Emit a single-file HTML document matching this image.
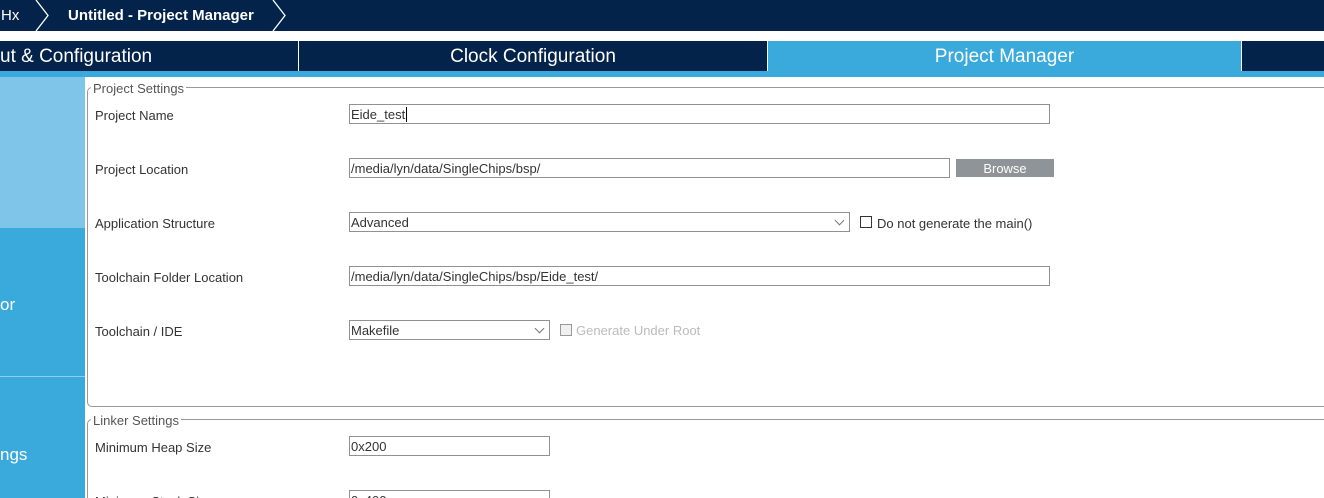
<!DOCTYPE html>
<html style="overflow:hidden;width:1324px;height:498px"><head><style>
*{margin:0;padding:0;box-sizing:border-box}
body{width:1324px;height:498px;overflow:hidden;background:#fff;font-family:"Liberation Sans",sans-serif;position:relative}
.a{position:absolute}
.lbl{position:absolute;font-size:13px;color:#333;left:95px}
.inp{position:absolute;border:1px solid #8e9296;height:20px;font-size:13px;color:#333;padding-left:1px;line-height:19px;background:#fff}
.chev{position:absolute;right:6px;width:7px;height:7px;border-right:1px solid #777;border-bottom:1px solid #777;transform:rotate(45deg);top:4px}
.cb{position:absolute;width:12px;height:12px;border:1px solid #333}
</style></head><body>
<div class="a" style="left:0;top:0;width:1324px;height:31px;background:#03234b"></div>
<div class="a" style="left:1px;top:7px;color:#fff;font-size:15px">Hx</div>
<svg class="a" style="left:0;top:0" width="300" height="31"><polyline points="36,0 48,15.5 36,31" fill="none" stroke="#fff" stroke-width="1.3"/><polyline points="273,0 285,15.5 273,31" fill="none" stroke="#fff" stroke-width="1.3"/></svg>
<div class="a" style="left:68px;top:7px;color:#fff;font-size:15px;font-weight:bold">Untitled - Project Manager</div>
<div class="a" style="left:0;top:41px;width:1324px;height:30px;background:#03234b"></div>
<div class="a" style="left:298px;top:41px;width:1px;height:30px;background:#fff"></div>
<div class="a" style="left:767px;top:41px;width:475px;height:30px;background:#3aa9db;border-left:1px solid #fff;border-right:1px solid #fff"></div>
<div class="a" style="left:0;top:46px;color:#fff;font-size:19px">ut &amp; Configuration</div>
<div class="a" style="left:299px;top:46px;width:468px;text-align:center;color:#fff;font-size:19px">Clock Configuration</div>
<div class="a" style="left:767px;top:46px;width:475px;text-align:center;color:#fff;font-size:19px">Project Manager</div>
<div class="a" style="left:0;top:71px;width:1324px;height:6px;background:#3aa9db"></div>
<div class="a" style="left:0;top:77px;width:85px;height:151px;background:#7fc5e9"></div>
<div class="a" style="left:0;top:228px;width:85px;height:270px;background:#3aa9db"></div>
<div class="a" style="left:0;top:376px;width:85px;height:1px;background:#8fd0ef"></div>
<div class="a" style="left:0;top:295px;color:#fff;font-size:17px">or</div>
<div class="a" style="left:0;top:445px;color:#fff;font-size:17px">ngs</div>

<div class="a" style="left:87px;top:87px;width:1250px;height:320px;border:1px solid #999;border-radius:5px"></div>
<div class="a" style="left:91px;top:81px;background:#fff;padding:0 2px;font-size:13px;color:#555">Project Settings</div>
<div class="a" style="left:87px;top:419px;width:1250px;height:100px;border:1px solid #999;border-radius:5px"></div>
<div class="a" style="left:91px;top:413px;background:#fff;padding:0 2px;font-size:13px;color:#555">Linker Settings</div>

<div class="lbl" style="top:108px">Project Name</div>
<div class="inp" style="left:349px;top:104px;width:701px">Eide_test<span style="border-left:1px solid #000;margin-left:1px"></span></div>
<div class="lbl" style="top:162px">Project Location</div>
<div class="inp" style="left:349px;top:158px;width:601px">/media/lyn/data/SingleChips/bsp/</div>
<div class="a" style="left:956px;top:159px;width:98px;height:18px;background:#8e9498;color:#fff;font-size:13px;text-align:center;line-height:19px">Browse</div>
<div class="lbl" style="top:216px">Application Structure</div>
<div class="inp" style="left:349px;top:212px;width:501px">Advanced<span class="chev"></span></div>
<div class="cb" style="left:860px;top:216px"></div>
<div class="a" style="left:877px;top:216px;font-size:13px;color:#333">Do not generate the main()</div>
<div class="lbl" style="top:270px">Toolchain Folder Location</div>
<div class="inp" style="left:349px;top:266px;width:701px">/media/lyn/data/SingleChips/bsp/Eide_test/</div>
<div class="lbl" style="top:324px">Toolchain / IDE</div>
<div class="inp" style="left:349px;top:320px;width:201px">Makefile<span class="chev"></span></div>
<div class="cb" style="left:560px;top:324px;border-color:#999;background:#f0f0f0"></div>
<div class="a" style="left:576px;top:323px;font-size:13px;color:#bbb">Generate Under Root</div>

<div class="lbl" style="top:440px">Minimum Heap Size</div>
<div class="inp" style="left:349px;top:436px;width:201px">0x200</div>
<div class="lbl" style="top:494px">Minimum Stack Size</div>
<div class="inp" style="left:349px;top:490px;width:201px">0x400</div>
</body></html>
